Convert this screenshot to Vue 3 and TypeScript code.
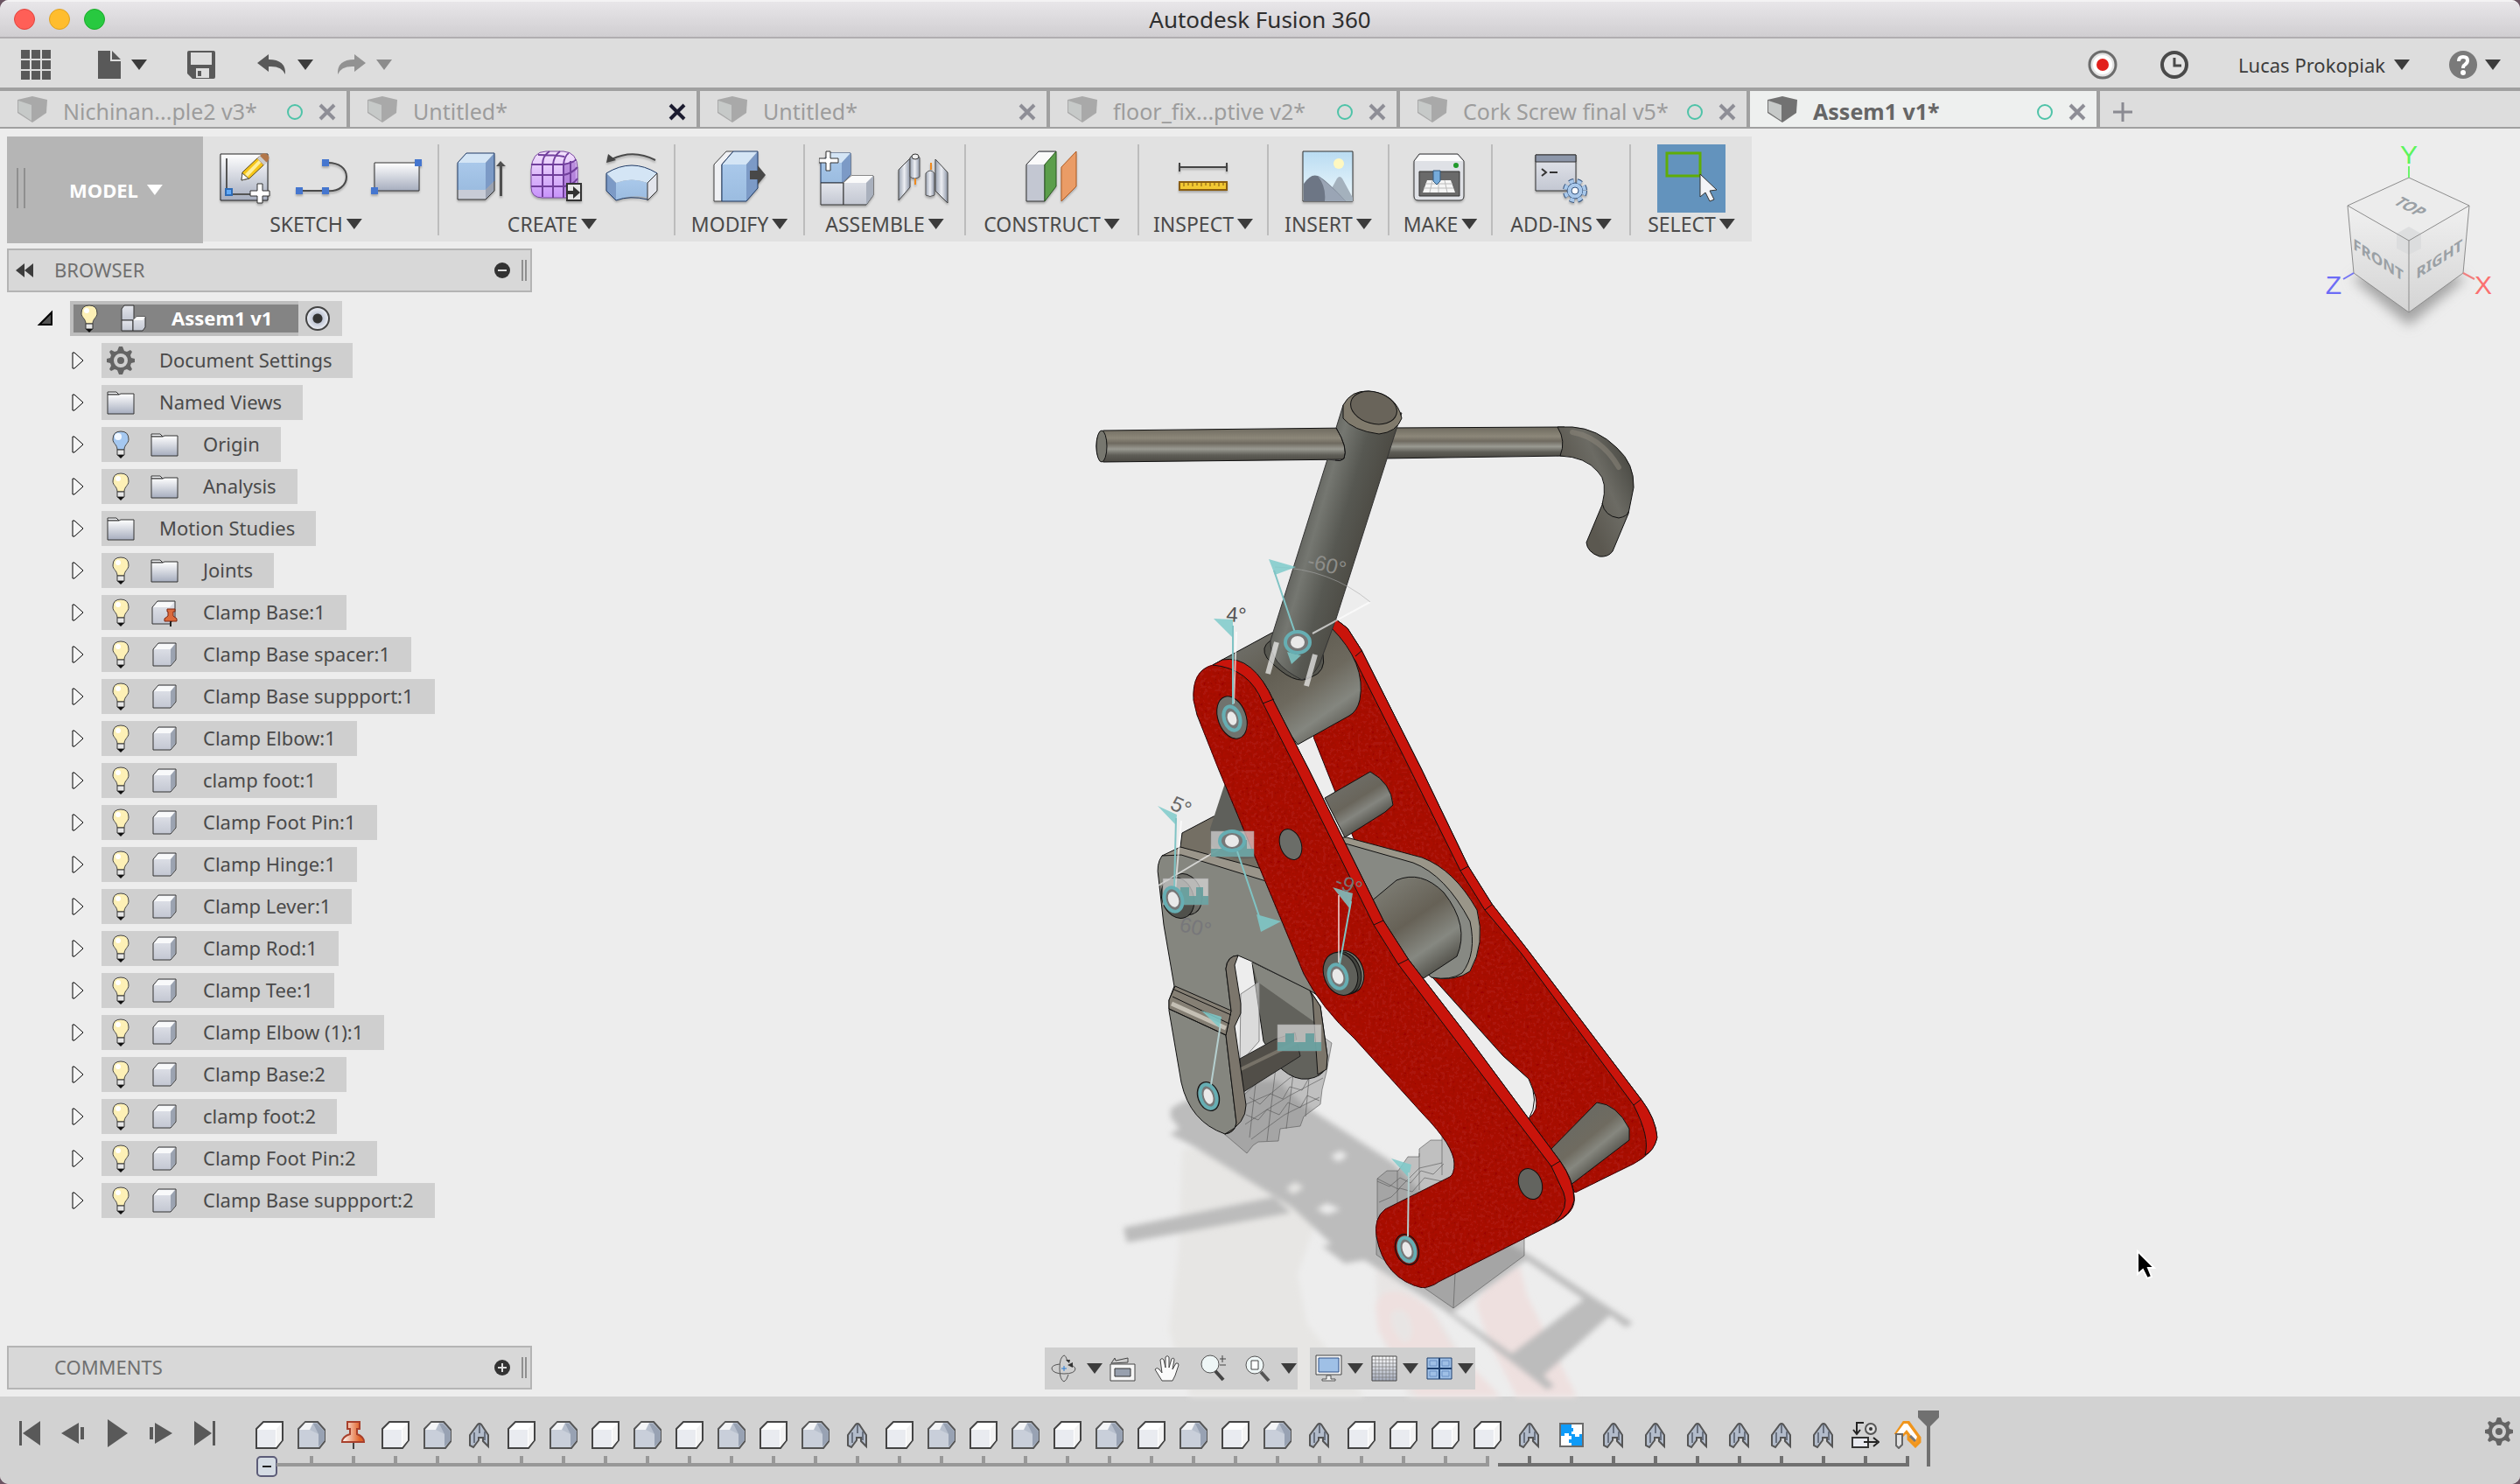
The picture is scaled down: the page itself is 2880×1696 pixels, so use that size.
<script setup lang="ts">
import { ref } from 'vue'

interface DocTab { title: string; saved: boolean; strong?: boolean }
interface ToolGroup { label: string; icons: string[]; active?: boolean }
interface TreeNode { label: string; bulb?: 'on' | 'off'; icon: string }

const tabs: DocTab[] = [
  { title: 'Nichinan...ple2 v3*', saved: true },
  { title: 'Untitled*', saved: false, strong: true },
  { title: 'Untitled*', saved: false },
  { title: 'floor_fix...ptive v2*', saved: true },
  { title: 'Cork Screw final v5*', saved: true },
  { title: 'Assem1 v1*', saved: true },
]
const activeTab = ref(5)

const groups: ToolGroup[] = [
  { label: 'SKETCH', icons: ['sketch', 'arc', 'rect'] },
  { label: 'CREATE', icons: ['extrude', 'form', 'revolve'] },
  { label: 'MODIFY', icons: ['presspull'] },
  { label: 'ASSEMBLE', icons: ['newcomp', 'hinge'] },
  { label: 'CONSTRUCT', icons: ['plane'] },
  { label: 'INSPECT', icons: ['measure'] },
  { label: 'INSERT', icons: ['image'] },
  { label: 'MAKE', icons: ['printer'] },
  { label: 'ADD-INS', icons: ['scripts'] },
  { label: 'SELECT', icons: ['select'], active: true },
]

const part = (label: string, icon = 'body'): TreeNode => ({ label, bulb: 'on', icon })
const nodes: TreeNode[] = [
  { label: 'Document Settings', icon: 'gear' },
  { label: 'Named Views', icon: 'folder' },
  { label: 'Origin', bulb: 'off', icon: 'folder' },
  { label: 'Analysis', bulb: 'on', icon: 'folder' },
  { label: 'Motion Studies', icon: 'folder' },
  { label: 'Joints', bulb: 'on', icon: 'folder' },
  part('Clamp Base:1', 'pinned'),
  part('Clamp Base spacer:1'),
  part('Clamp Base suppport:1'),
  part('Clamp Elbow:1'),
  part('clamp foot:1'),
  part('Clamp Foot Pin:1'),
  part('Clamp Hinge:1'),
  part('Clamp Lever:1'),
  part('Clamp Rod:1'),
  part('Clamp Tee:1'),
  part('Clamp Elbow (1):1'),
  part('Clamp Base:2'),
  part('clamp foot:2'),
  part('Clamp Foot Pin:2'),
  part('Clamp Base suppport:2'),
]

const playback = ['first', 'prev', 'play', 'next', 'last']
const names: Record<string, string> = { c: 't-comp', e: 't-ext', p: 't-pin', j: 't-joint', b: 't-as', m: 't-move', o: 't-drive' }
const history = [...'cepcejcecececejcececececejcccc'].map((k) => names[k])
const recent = [...'jbjjjjjjmo'].map((k) => names[k])
</script>

<template>
  <div class="app">
    <svg class="sprite" width="0" height="0" aria-hidden="true">
      <defs>
        <linearGradient id="gPage" x1="0" y1="0" x2="0" y2="1"><stop offset="0" stop-color="#fff" /><stop offset="1" stop-color="#a6adbe" /></linearGradient>
        <linearGradient id="gBlue" x1="0" y1="0" x2="0" y2="1"><stop offset="0" stop-color="#a9c8ea" /><stop offset="1" stop-color="#9bbce0" /></linearGradient>
        <linearGradient id="gGrey" x1="0" y1="0" x2="0" y2="1"><stop offset="0" stop-color="#e4e6ec" /><stop offset="1" stop-color="#c3c7d2" /></linearGradient>
        <linearGradient id="gForm" x1="0" y1="0" x2="0" y2="1"><stop offset="0" stop-color="#f4e4fc" /><stop offset="1" stop-color="#c792fa" /></linearGradient>
        <linearGradient id="gPin" x1="0" y1="0" x2="1" y2="0"><stop offset="0" stop-color="#fff" /><stop offset=".8" stop-color="#e2632a" /></linearGradient>
        <linearGradient id="gSky" x1="0" y1="0" x2="0" y2="1"><stop offset="0" stop-color="#b9dcf2" /><stop offset="1" stop-color="#eef8fc" /></linearGradient>
        <linearGradient id="gMetal" x1="0" y1="0" x2="1" y2="0"><stop offset="0" stop-color="#9aa3b2" /><stop offset=".5" stop-color="#eceef3" /><stop offset="1" stop-color="#8e97a8" /></linearGradient>
      </defs>

      <!-- quick access -->
      <symbol id="grid" viewBox="0 0 34 34"><path fill="#595959" d="M0 0h10v10H0zM12 0h10v10H12zM24 0h10v10H24zM0 12h10v10H0zM12 12h10v10H12zM24 12h10v10H24zM0 24h10v10H0zM12 24h10v10H12zM24 24h10v10H24z" /></symbol>
      <symbol id="file" viewBox="0 0 32 32"><path fill="#595959" d="M2 0h14v12h12v20H2zM18 0l10 10H18z" /></symbol>
      <symbol id="save" viewBox="0 0 32 32"><path fill="#595959" fill-rule="evenodd" d="M2 0h28q2 0 2 2v28q0 2-2 2H6l-6-6V2q0-2 2-2zM4 2v14h24V2zM10 20v11h15V20zM12 23h4v6h-4z" /></symbol>
      <symbol id="undo" viewBox="0 0 34 24"><path fill="#595959" d="M0 10L13 0v6q20 0 19 17q-4-10-19-9v6z" /></symbol>
      <symbol id="redo" viewBox="0 0 34 24"><path fill="#929292" d="M34 10L21 0v6q-20 0-19 17q4-10 19-9v6z" /></symbol>
      <symbol id="record" viewBox="0 0 34 34"><circle cx="17" cy="17" r="15" fill="#e4e4e4" stroke="#6c6c6c" stroke-width="3" /><circle cx="17" cy="17" r="11" fill="#fff" /><circle cx="17" cy="17" r="7" fill="#e2201c" /></symbol>
      <symbol id="clock" viewBox="0 0 34 34"><circle cx="17" cy="17" r="14" fill="#e4e4e4" stroke="#4a4a4a" stroke-width="4" /><path d="M17 9v9h8" fill="none" stroke="#4a4a4a" stroke-width="3" /></symbol>
      <symbol id="help" viewBox="0 0 34 34"><circle cx="17" cy="17" r="16" fill="#7a7a7a" /><path d="M12 13q0-5 5-5t5 4q0 3-3 5q-2 1-2 4" fill="none" stroke="#fff" stroke-width="4" /><circle cx="17" cy="26" r="3" fill="#fff" /></symbol>
      <symbol id="cube" viewBox="0 0 34 30"><path fill="currentColor" d="M0 4L17 0l17 4-1 15-16 11L0 19z" /><path fill="#c6c9c8" d="M1 5l15 5v18L1 18z" /></symbol>

      <!-- ribbon -->
      <symbol id="sketch" viewBox="0 0 64 64">
        <path d="M4 4h54v53H4z" fill="url(#gPage)" stroke="#222" stroke-width="1" />
        <path d="M11 9v41h34" fill="none" stroke="#555" stroke-width="2" /><path d="M10 44h7v7h-7z" fill="#62aaf7" stroke="#2e6cb8" stroke-width="2" />
        <path d="M28 34l1-9L48 7l8 7-19 18z" fill="#f6c518" stroke="#5b4a1a" /><path d="M32 27L50 9l3 2-18 19z" fill="#fff09a" /><path d="M28 34l1-8 7 6z" fill="#fff" stroke="#555" />
        <path d="M46 9l5-5q4-2 7 1t0 7l-5 5z" fill="#b2774a" /><path d="M46 9l3-3 8 8-3 3z" fill="#ccc" />
        <path d="M46 38h6v8h8v6h-8v8h-6v-8h-8v-6h8z" fill="#fff" stroke="#333" stroke-width="1" />
      </symbol>
      <symbol id="arc" viewBox="0 0 64 64"><path d="M8 46h30c16 2 24-7 24-16S54 13 38 14" fill="none" stroke="#4a4a4a" stroke-width="2" /><path fill="#4576cf" d="M4 42h8v8H4zM34 42h8v8h-8zM34 10h8v8h-8z" /></symbol>
      <symbol id="rect" viewBox="0 0 64 64"><path d="M8 14h51v32H8z" fill="url(#gPage)" stroke="#333" stroke-width="1" /><path fill="#4576cf" d="M4 42h8v8H4zM54 10h8v8h-8z" /></symbol>
      <symbol id="extrude" viewBox="0 0 64 64">
        <path d="M5 14L15 3h32L37 14z" fill="#d4e5f5" /><path d="M5 14h32v31H5z" fill="url(#gBlue)" /><path d="M37 14L47 3v32L37 45z" fill="#7c9ac6" /><path d="M5 45h32v11H5z" fill="#c8ccd6" /><path d="M37 45l10-10v11L37 56z" fill="#9ba2b0" />
        <path d="M5 45V14L15 3h32v32" fill="none" stroke="#1e3a66" stroke-width="1" /><path d="M5 45v11h32l10-10V35" fill="none" stroke="#333" stroke-width="1" />
        <path d="M53 52V18h-4l5-6 6 6h-4v34z" fill="#4f4f4f" />
      </symbol>
      <symbol id="form" viewBox="0 0 64 64">
        <path d="M3 22Q4 1 20 1h20q16 1 16 20v18q0 15-14 15H16Q3 54 3 42z" fill="url(#gForm)" stroke="#7a4aa0" stroke-width="1" />
        <path d="M40 16q12-6 14-2v28q-4 10-12 10z" fill="#9b62c8" opacity=".6" />
        <path d="M3 16h37q14-3 14-6M4 28h36q10-2 16-9M3 41h38q10-2 15-9M11 5q20 0 30 2M16 53V16q0-10 8-15M28 54V16q1-10 8-15M40 54V16q1-10 6-13M48 50V12" fill="none" stroke="#713f9c" stroke-width="2" />
        <path d="M44 38h16v19H44z" fill="#e6e6e6" stroke="#333" stroke-width="2" /><path d="M43 46h8v-5l8 7-8 7v-5h-8z" fill="#333" />
      </symbol>
      <symbol id="revolve" viewBox="0 0 64 64">
        <path d="M3 26Q32 8 61 26L50 37Q32 30 14 37z" fill="#d4e5f5" /><path d="M3 26l11 11v20L3 46z" fill="#7c9ac6" /><path d="M14 37q18-7 36 0v17q-18-4-36 3z" fill="url(#gBlue)" /><path d="M50 37l11-11v20L50 57z" fill="#e3e5ec" stroke="#333" />
        <path d="M3 46V26Q32 8 61 26M3 46l11 11q16-6 36-1" fill="none" stroke="#1e3a66" stroke-width="1" />
        <path d="M9 10Q34-2 59 11" fill="none" stroke="#4a4a4a" stroke-width="2" /><path d="M3 14L5 4l9 7z" fill="#444" />
      </symbol>
      <symbol id="presspull" viewBox="0 0 64 64">
        <path d="M3 16L17 1h8L12 16v42H3z" fill="#f0f1f4" stroke="#444" /><path d="M12 16h28v42H12z" fill="url(#gBlue)" /><path d="M12 16L25 1h28L40 16z" fill="#d4e5f5" /><path d="M40 16L53 1v42L40 58z" fill="#7c9ac6" /><path d="M12 58V16L25 1h28v42L40 58z" fill="none" stroke="#1e3a66" />
        <path d="M44 23h9v-6l9 11-9 11v-6h-9z" fill="#484848" />
      </symbol>
      <symbol id="newcomp" viewBox="0 0 64 64">
        <path d="M2 14L12 3h24v25L26 37H2z" fill="url(#gBlue)" stroke="#1e3a66" /><path d="M12 3h24L26 14H2z" fill="#d4e5f5" /><path d="M26 14L36 3v25l-10 9z" fill="#7c9ac6" />
        <path d="M2 37h26V62H2z" fill="url(#gGrey)" stroke="#333" /><path d="M28 37l9-8h25v22L54 62H28z" fill="url(#gGrey)" stroke="#333" /><path d="M28 37l9-8h25l-8 8z" fill="#fafafa" /><path d="M54 37l8-8v22l-8 11z" fill="#a9b0bd" />
        <path d="M8 1h5v8h9v5h-9v9H8v-9H0V9h8z" fill="#fff" stroke="#333" stroke-width="1" />
      </symbol>
      <symbol id="hinge" viewBox="0 0 64 64">
        <path d="M5 22L18 9v33L5 57z" fill="url(#gMetal)" stroke="#444" /><path d="M18 8q5-6 11 0v22q-6 4-11 0z" fill="url(#gMetal)" stroke="#555" /><ellipse cx="24" cy="7" rx="4" ry="3" fill="#eee" stroke="#333" />
        <path d="M24 32v7M42 14v8" stroke="#ef8a1e" stroke-width="2" /><path d="M36 26q5-6 10 0v25q-5 3-10 0z" fill="url(#gMetal)" stroke="#555" /><path d="M47 10l14 15v35L47 46z" fill="url(#gMetal)" stroke="#444" />
      </symbol>
      <symbol id="plane" viewBox="0 0 64 64">
        <path d="M3 16L17 1h20L24 16v42H3z" fill="#c3c7d2" stroke="#333" /><path d="M4 16L17 2h20L24 16z" fill="#fafafa" /><path d="M24 16L37 1v40L24 58z" fill="#5b9e4b" stroke="#2b5a22" /><path d="M43 19L60 1v40L43 58z" fill="#ea9c66" stroke="#b05a20" />
      </symbol>
      <symbol id="measure" viewBox="0 0 64 64">
        <path d="M5 14v10M59 14v10M5 19h54" stroke="#444" stroke-width="2" /><path d="M5 36h54v9H5z" fill="#f2c832" stroke="#8a5e12" stroke-width="2" /><path d="M10 37v4M15 37v3M20 37v4M25 37v3M30 37v4M35 37v3M40 37v4M45 37v3M50 37v4M55 37v3" stroke="#7a5510" />
      </symbol>
      <symbol id="image" viewBox="0 0 64 64">
        <path d="M3 1h57v57H3z" fill="url(#gSky)" stroke="#333" /><circle cx="44" cy="15" r="6" fill="#fff8c0" /><path d="M28 58l14-26q3-4 6 0l12 22v4z" fill="#a4b1bd" /><path d="M4 38q8-12 16-9t32 29H4z" fill="#6d7685" /><path d="M20 29q14 10 32 29H28q2-16-8-29z" fill="#9aa5b5" />
      </symbol>
      <symbol id="printer" viewBox="0 0 64 64">
        <path d="M2 12l6-8h44l7 8v40q0 5-5 5H7q-5 0-5-5z" fill="#dfe1e6" stroke="#333" stroke-width="1" /><path d="M3 12l6-7h42l7 7z" fill="#fbfbfb" /><path d="M8 24h46v28H8z" fill="#6a6a6a" stroke="#333" /><path d="M17 34h27l5 14H12z" fill="#f5f5f5" /><path d="M15 38h31M13 43h34M23 34l-3 14M30 34v14M37 34l3 14" stroke="#bbb" /><path d="M24 23h8v12l-4 4-4-4z" fill="#76abda" stroke="#33597c" /><circle cx="50" cy="17" r="3" fill="#229a2c" />
      </symbol>
      <symbol id="scripts" viewBox="0 0 64 64">
        <path d="M3 5h46v41H3z" fill="url(#gGrey)" stroke="#333" /><path d="M3 5h46v8H3z" fill="#8d97aa" stroke="#333" /><path d="M10 21l5 4-5 4M19 25h9" fill="none" stroke="#333" stroke-width="2" />
        <circle cx="48" cy="46" r="11" fill="none" stroke="#33527c" stroke-width="6" stroke-dasharray="5 4" /><circle cx="48" cy="46" r="9" fill="#a9c8ea" stroke="#33527c" /><circle cx="48" cy="46" r="11" fill="none" stroke="#a9c8ea" stroke-width="4" stroke-dasharray="5 4" /><circle cx="48" cy="46" r="4" fill="#fff" stroke="#33527c" />
      </symbol>
      <symbol id="select" viewBox="0 0 64 64"><path d="M4 3h38v26H4z" fill="none" stroke="#60ad07" stroke-width="3" /><path d="M42 27v26l6-5 5 10 5-2-5-10 8-1z" fill="#f3f4f7" stroke="#333" stroke-width="1" /></symbol>

      <!-- browser -->
      <symbol id="bulb-on" viewBox="0 0 32 32"><path d="M16 1q9 0 9 9c0 5-5 6-5 12h-8c0-6-5-7-5-12q0-9 9-9z" fill="#fdf0b6" stroke="#444" stroke-width="1" /><circle cx="13" cy="7" r="3" fill="#fff" /><path d="M12 22h8v6h-8z" fill="#e6e6e6" stroke="#333" /><path d="M12 28h8l-4 4z" fill="#111" /></symbol>
      <symbol id="bulb-off" viewBox="0 0 32 32"><path d="M16 1q9 0 9 9c0 5-5 6-5 12h-8c0-6-5-7-5-12q0-9 9-9z" fill="#a5c8f0" stroke="#444" stroke-width="1" /><circle cx="13" cy="7" r="4" fill="#f2f8ff" /><path d="M12 22h8v6h-8z" fill="#e6e6e6" stroke="#333" /><path d="M12 28h8l-4 4z" fill="#111" /></symbol>
      <symbol id="folder" viewBox="0 0 32 32"><path d="M1 7V4h10l3 3z" fill="#f5f6f8" stroke="#333" /><path d="M1 7h13l2-1h15v23H1z" fill="url(#gPage)" stroke="#333" /></symbol>
      <symbol id="body" viewBox="0 0 32 32"><path d="M3 10l6-7h20v19l-6 7H3z" fill="url(#gGrey)" stroke="#333" stroke-width="1" /><path d="M4 10l5-6h19l-5 6z" fill="#f8f9fa" /><path d="M23 10l5-6v18l-5 6z" fill="#9ba3b1" /></symbol>
      <symbol id="pinned" viewBox="0 0 32 32"><path d="M2 10l6-7h20v19l-6 7H2z" fill="url(#gGrey)" stroke="#333" stroke-width="1" /><path d="M3 10l5-6h19l-5 6z" fill="#f8f9fa" /><path d="M19 12h9v3h-2v5l4 3v3H16v-3l4-3v-5h-1z" fill="#dc6a3c" stroke="#7a2410" /><path d="M23 26v6" stroke="#222" stroke-width="2" /></symbol>
      <symbol id="assembly" viewBox="0 0 32 32"><path d="M3 5l3-4h11v17H3z" fill="url(#gGrey)" stroke="#333" /><path d="M3 18h13v12H3z" fill="url(#gGrey)" stroke="#333" /><path d="M16 18l4-4h10v12l-3 4H16z" fill="url(#gGrey)" stroke="#333" /><path d="M16 18l4-4h10l-3 4z" fill="#fafafa" /></symbol>
      <symbol id="gear" viewBox="0 0 32 32"><path fill="#646464" fill-rule="evenodd" d="M14 0h4l2 5 3 1 4-2 2 2-2 4 1 3 4 1v4l-4 1-1 3 2 4-2 2-4-2-3 1-2 5h-4l-2-5-3-1-4 2-2-2 2-4-1-3-4-1v-4l4-1 1-3-2-4 2-2 4 2 3-1zM16 8a8 8 0 1 0 0 16a8 8 0 1 0 0-16zM16 12a4 4 0 1 1 0 8a4 4 0 1 1 0-8z" /></symbol>

      <!-- navigation bar -->
      <symbol id="orbit" viewBox="0 0 32 32"><path d="M20 8Q18 1 16 1q-5 2-5 15t5 15q3-1 5-8M11 11Q2 12 2 16q1 6 14 6t13-6q-1-3-6-4" fill="none" stroke="#555" stroke-width="1" /><path d="M18 6l5 0-1 4zM26 9l-6 3 6 3z" fill="#333" /><path d="M16 13v6M13 16h6" stroke="#2d7fd6" stroke-width="1" /></symbol>
      <symbol id="lookat" viewBox="0 0 32 32"><path d="M4 10l4-6 1 3 14-3v5z" fill="#ccc" stroke="#444" /><path d="M3 11h28v19H3z" fill="#f6f6f6" stroke="#444" stroke-width="1" /><path d="M8 16h18v9H8z" fill="#98a0ae" stroke="#333" /></symbol>
      <symbol id="pan" viewBox="0 0 32 32"><path d="M10 30L2 17q2-3 5 0l3 4L8 6q2-3 4 0l2 9V3q2-3 4 0v12l3-10q3-2 3 1l-2 11 4-7q3-1 3 2l-4 12-3 6z" fill="#fafafa" stroke="#444" /></symbol>
      <symbol id="zoom" viewBox="0 0 32 32"><circle cx="13" cy="11" r="10" fill="#eef6f6" stroke="#555" stroke-width="1" /><path d="M19 19l9 10" stroke="#444" stroke-width="4" /><path d="M27 1v8M24 5h7M24 12h7" stroke="#444" /></symbol>
      <symbol id="fit" viewBox="0 0 32 32"><circle cx="12" cy="12" r="10" fill="#eef6f6" stroke="#555" stroke-width="1" /><path d="M8 7h8v10H8z" fill="#fff" stroke="#444" /><path d="M19 20l9 10" stroke="#555" stroke-width="4" /></symbol>
      <symbol id="display" viewBox="0 0 32 32"><path d="M1 1h29v22H1z" fill="#f4f4f4" stroke="#444" stroke-width="1" /><path d="M4 4h23v16H4z" fill="#9fc0e6" stroke="#2d4f86" stroke-width="1" /><path d="M13 24h5v4h5v2H8v-2h5z" fill="#eee" stroke="#555" /></symbol>
      <symbol id="gridset" viewBox="0 0 32 32"><path d="M2 2h28v28H2z" fill="url(#gPage)" /><path d="M6 2v28M10 2v28M14 2v28M18 2v28M22 2v28M26 2v28M2 6h28M2 10h28M2 14h28M2 18h28M2 22h28M2 26h28" fill="none" stroke="#777" stroke-width="1" opacity=".7" /><path d="M2 2h28v28H2z" fill="none" stroke="#444" /></symbol>
      <symbol id="views" viewBox="0 0 32 32"><path d="M2 4h28v24H2z" fill="#9fc0e6" stroke="#1e4070" stroke-width="1" /><path d="M16 4v24M2 16h28" stroke="#1e4070" stroke-width="2" /><path d="M5 7h8v6H5zM19 7h8v6h-8zM5 19h8v6H5zM19 19h8v6h-8z" fill="none" stroke="#6b90c4" /></symbol>

      <!-- timeline -->
      <symbol id="first" viewBox="0 0 32 32"><path fill="#595959" d="M4 2h3v28H4zM28 2v28L8 16z" /></symbol>
      <symbol id="prev" viewBox="0 0 32 32"><path fill="#595959" d="M22 4v24L2 16zM24 9h4v14h-4z" /></symbol>
      <symbol id="play" viewBox="0 0 32 32"><path fill="#595959" d="M5 0l23 16L5 32z" /></symbol>
      <symbol id="next" viewBox="0 0 32 32"><path fill="#595959" d="M9 4v24l20-12zM3 9h4v14H3z" /></symbol>
      <symbol id="last" viewBox="0 0 32 32"><path fill="#595959" d="M25 2h3v28h-3zM4 2v28l20-14z" /></symbol>
      <symbol id="t-comp" viewBox="0 0 32 32"><path d="M1 9l8-8h22v21l-7 9H1z" fill="#fff" stroke="#444" stroke-width="2" /><path d="M2 10h21v20H2z" fill="#e9ebf0" /><path d="M24 9l6-7v20l-6 7z" fill="#f3f3f3" /></symbol>
      <symbol id="t-ext" viewBox="0 0 32 32"><path d="M1 9l8-8h14l9 10v11l-7 9H1z" fill="#b7bfcd" stroke="#555" stroke-width="2" /><path d="M2 10l7-8h9l-4 8z" fill="#f4f5f7" /><path d="M18 3l6 12v14l7-7V12l-9-9z" fill="#98a2b3" /><path d="M2 10h12l10 5v15H2z" fill="#c9cfda" /></symbol>
      <symbol id="t-pin" viewBox="0 0 32 32"><path d="M9 1h14v8h-3v6q8 3 8 9H3q0-6 9-9V9H9z" fill="url(#gPin)" stroke="#a8402c" stroke-width="2" /><path d="M16 25v7" stroke="#444" stroke-width="2" /></symbol>
      <symbol id="t-joint" viewBox="0 0 32 32"><path d="M5 16l9-12q2-2 4 0l8 12v13l-6-6v-4h-5v3l-6 8-4-2z" fill="#b3bccb" stroke="#555" stroke-width="2" /><path d="M16 4v10M10 13v12M22 12v10" stroke="#6a7280" stroke-width="2" /></symbol>
      <symbol id="t-as" viewBox="0 0 32 32"><path d="M3 3h26v26H3z" fill="#0f9bf8" stroke="#6b6b6b" stroke-width="2" /><path d="M16 4h12v11h-3v3h-5v-3h-4v-3h2V8h-2zM4 17h4v-3h5v3h3v4h-3v4h3v3H4z" fill="#fff" /></symbol>
      <symbol id="t-move" viewBox="0 0 32 32"><path d="M1 19h18v11H1z" fill="#e9eaf0" stroke="#333" stroke-width="2" /><path d="M14 24h15M25 19l6 5-6 5M14 2H6v12M2 10l4 5 4-5" fill="none" stroke="#222" stroke-width="2" /><circle cx="22" cy="9" r="6" fill="#ddd" stroke="#555" stroke-width="2" /><circle cx="22" cy="9" r="2" fill="#333" /></symbol>
      <symbol id="t-drive" viewBox="0 0 32 32"><path d="M3 14L12 1h5l13 18v5l-5 5-8-8v-6l-3-2-4 4z" fill="#f59a24" stroke="#f0951c" stroke-width="3" /><path d="M3 15L12 3h4l11 15-2 5-10-13-6 7z" fill="#fff" /><path d="M3 15h7v12l-4 4-3-3z" fill="#e2e2e2" stroke="#666" stroke-width="2" /><path d="M19 17l6 6" stroke="#777" stroke-width="3" /></symbol>
    </svg>

    <header class="titlebar">
      <div class="lights">
        <button class="light red" aria-label="Close"></button>
        <button class="light amber" aria-label="Minimize"></button>
        <button class="light green" aria-label="Zoom"></button>
      </div>
      <h1 class="title">Autodesk Fusion 360</h1>
    </header>

    <div class="quickbar">
      <button class="quick" aria-label="Data panel"><svg width="34" height="34"><use href="#grid" /></svg></button>
      <button class="quick" aria-label="File"><svg width="32" height="32"><use href="#file" /></svg><i class="caret"></i></button>
      <button class="quick save" aria-label="Save"><svg width="32" height="32"><use href="#save" /></svg></button>
      <button class="quick" aria-label="Undo"><svg width="34" height="24"><use href="#undo" /></svg><i class="caret"></i></button>
      <button class="quick redo" aria-label="Redo"><svg width="34" height="24"><use href="#redo" /></svg><i class="caret dim"></i></button>
      <span class="grow"></span>
      <button class="quick" aria-label="Record"><svg width="34" height="34"><use href="#record" /></svg></button>
      <button class="quick" aria-label="Job status"><svg width="34" height="34"><use href="#clock" /></svg></button>
      <button class="quick user">Lucas Prokopiak<i class="caret"></i></button>
      <button class="quick helpbtn" aria-label="Help"><svg width="34" height="34"><use href="#help" /></svg><i class="caret"></i></button>
    </div>

    <nav class="tabs">
      <div v-for="(t, i) in tabs" :key="i" class="tab" :class="{ active: i === activeTab }">
        <button class="tabname" @click="activeTab = i"><svg width="34" height="30"><use href="#cube" /></svg><span>{{ t.title }}</span></button>
        <i v-if="t.saved" class="ring"></i>
        <button class="close" :class="{ strong: t.strong }" aria-label="Close tab"><svg width="20" height="20" viewBox="0 0 20 20"><path d="M2 2l16 16M18 2L2 18" fill="none" stroke="currentColor" stroke-width="4" /></svg></button>
      </div>
      <button class="addtab" aria-label="New tab"><svg width="24" height="24" viewBox="0 0 24 24"><path d="M12 1v22M1 12h22" stroke="#8a8a92" stroke-width="3" /></svg></button>
    </nav>

    <main class="workspace">
      <svg class="scene" viewBox="0 147 2880 1449" preserveAspectRatio="xMidYMid meet" aria-hidden="true">
        <defs>
          <filter id="soft" x="-10%" y="-10%" width="120%" height="120%"><feGaussianBlur stdDeviation="3" /></filter>
          <filter id="grain" x="0" y="0" width="100%" height="100%">
            <feTurbulence type="fractalNoise" baseFrequency=".25" numOctaves="2" seed="4" result="n" />
            <feColorMatrix in="n" type="matrix" values="0 0 0 0 .3  0 0 0 0 0  0 0 0 0 0  0 0 0 -1.4 .85" result="d" />
            <feComposite in="d" in2="SourceGraphic" operator="in" result="c" />
            <feMerge><feMergeNode in="SourceGraphic" /><feMergeNode in="c" /></feMerge>
          </filter>
          <linearGradient id="bar" x1="0" y1="0" x2="0" y2="1"><stop offset="0" stop-color="#6e6a5f" /><stop offset=".3" stop-color="#8c8779" /><stop offset=".45" stop-color="#6f6a60" /><stop offset=".62" stop-color="#9a9a92" /><stop offset=".8" stop-color="#5e5d56" /><stop offset="1" stop-color="#4b4943" /></linearGradient>
          <linearGradient id="rod" gradientUnits="userSpaceOnUse" x1="1484" y1="600" x2="1560" y2="622"><stop offset="0" stop-color="#5c5d58" /><stop offset=".25" stop-color="#757771" /><stop offset=".6" stop-color="#575852" /><stop offset="1" stop-color="#4c4a43" /></linearGradient>
          <linearGradient id="hook" gradientUnits="userSpaceOnUse" x1="1800" y1="560" x2="1866" y2="530"><stop offset="0" stop-color="#5b5850" /><stop offset=".5" stop-color="#6c6b64" /><stop offset="1" stop-color="#4a4a44" /></linearGradient>
          <linearGradient id="sleeve" gradientUnits="userSpaceOnUse" x1="1435" y1="722" x2="1525" y2="850"><stop offset="0" stop-color="#6f6f69" /><stop offset=".3" stop-color="#625e53" /><stop offset=".55" stop-color="#6d695e" /><stop offset=".78" stop-color="#84867f" /><stop offset="1" stop-color="#524f48" /></linearGradient>
          <linearGradient id="shaftA" gradientUnits="userSpaceOnUse" x1="1536" y1="896" x2="1566" y2="944"><stop offset="0" stop-color="#6e6d66" /><stop offset=".4" stop-color="#69655b" /><stop offset=".65" stop-color="#84857f" /><stop offset="1" stop-color="#4f4d46" /></linearGradient>
          <linearGradient id="drum" gradientUnits="userSpaceOnUse" x1="1585" y1="1015" x2="1650" y2="1110"><stop offset="0" stop-color="#7a7970" /><stop offset=".4" stop-color="#666156" /><stop offset=".72" stop-color="#868881" /><stop offset="1" stop-color="#4d4b44" /></linearGradient>
          <linearGradient id="shaftB" gradientUnits="userSpaceOnUse" x1="1800" y1="1284" x2="1836" y2="1328"><stop offset="0" stop-color="#6b6a62" /><stop offset=".4" stop-color="#6f6b60" /><stop offset=".65" stop-color="#86877f" /><stop offset="1" stop-color="#55534c" /></linearGradient>
        </defs>

        <!-- floor reflection -->
        <g filter="url(#soft)">
          <path d="M1351 1313L1347 1430 1336 1520 1360 1596H1559L1494 1513 1483 1457 1514 1367 1507 1307z" fill="#e7e6e4" />
          <path d="M1572 1440L1575 1520 1610 1596H1700L1640 1500z" fill="#e8e5e4" />
          <path fill-rule="evenodd" d="M1572 1493Q1576 1476 1592 1476T1633 1493L1660 1540 1690 1570 1715 1596H1620L1575 1520zM1590 1500Q1588 1520 1605 1535Q1618 1530 1612 1510T1590 1500z" fill="#eee0df" />
          <path d="M1687 1490Q1700 1460 1737 1447L1745 1480 1802 1596H1733L1700 1530z" fill="#eee0df" />
        </g>
        <!-- cast shadow -->
        <g filter="url(#soft)">
          <path fill-rule="evenodd" d="M1338 1267L1350 1260 1423 1235 1460 1235 1490 1263 1594 1330 1640 1380 1746 1433 1866 1512 1858 1517 1840 1503 1764 1572 1776 1584 1768 1588 1722 1552 1650 1497 1559 1440 1537 1444 1511 1424 1522 1422 1477 1380 1364 1310 1337 1296 1348 1290 1338 1277zM1521 1321L1532 1315 1540 1321 1529 1328zM1470 1358L1480 1351 1490 1357 1478 1365zM1504 1382L1516 1375 1532 1382 1517 1388zM1660 1500L1728 1547 1810 1485 1744 1440z" fill="#bcbcbc" />
          <path d="M1284 1403L1288 1420 1475 1386 1456 1368z" fill="#bcbcbc" />
        </g>

        <!-- clamp feet -->
        <g fill="#8a8a8a" fill-opacity=".45" stroke="#555" stroke-opacity=".6">
          <path d="M1398 1295L1425 1318 1432 1309 1438 1305 1461 1304 1463 1290 1486 1287 1490 1276 1509 1262 1511 1245 1516 1225 1522 1192 1505 1180 1461 1215 1423 1250z" />
          <path d="M1428 1300L1436 1230M1448 1304L1458 1220M1470 1290L1480 1212M1492 1276L1498 1210M1424 1262L1452 1250 1474 1232 1514 1212M1423 1285L1448 1268 1474 1252 1512 1232M1430 1302L1446 1290 1468 1274 1508 1254M1424 1274l14 6 10-12 14 6 10-14 14 6 8-14 14 6M1428 1254l12 8 12-12 14 6 8-14 14 4 8-14" fill="none" />
          <path d="M1574 1393V1347L1585 1338H1598L1609 1322H1622V1313L1635 1303H1648V1290L1664 1330 1660 1345z" />
          <path d="M1574 1350l14 6 12-10 12 6 12-14 14 4 12-12M1576 1374l14-6 10-10 14 4 14-16 20 4M1597 1338v40M1622 1318v42M1648 1303v40M1574 1347l24 12 24-24 26-6" fill="none" />
          <path d="M1573 1413V1434L1661 1495 1742 1435V1412L1663 1455zM1663 1455L1661 1495" />
        </g>

        <g stroke="#111" stroke-width="1" stroke-linejoin="round">
          <!-- base plates -->
          <path d="M1431 1100L1444 1190 1465 1222Q1480 1235 1495 1233T1516 1220L1517 1207 1509 1150 1497 1132z" fill="#62625c" />
          <path d="M1431 1100L1497 1132 1505 1170 1437 1122z" fill="#85867f" stroke="none" />
          <path d="M1497 1132L1509 1150 1517 1207 1516 1222 1506 1228 1500 1140z" fill="#7b756a" />
          <path d="M1418 1136L1439 1122V1190L1417 1215z" fill="#cfcfcf" fill-opacity=".6" stroke="#888" />
          <path d="M1417 1210L1457 1188 1480 1180 1486 1207 1421 1248z" fill="#514e48" stroke="#222" />
          <path d="M1418 1222L1484 1190" stroke="#777268" stroke-width="4" />
          <path d="M1349 968L1351 952 1387 933 1420 930 1450 985 1440 1000z" fill="#746f64" />
          <path d="M1399 898L1383 947 1384 965Q1400 986 1436 980L1444 960 1408 880z" fill="#5f605b" stroke="none" />
          <path d="M1328 978L1349 968 1446 994V1008L1350 979z" fill="#9a958a" />
          <path d="M1328 978Q1321 988 1324 1003L1330 1057 1342 1127 1336 1143V1155L1350 1237Q1360 1282 1400 1296Q1412 1294 1413 1283L1401 1183 1407 1155 1401 1107Q1402 1092 1415 1092L1429 1098 1497 1132 1525 1150 1450 1008 1350 977z" fill="#85867f" />
          <path d="M1401 1107Q1403 1092 1415 1092L1411 1103 1418 1147V1158L1411 1173 1424 1263Q1424 1284 1400 1296Q1412 1294 1413 1283L1401 1183 1407 1155z" fill="#7c766c" />
          <path d="M1343 1127L1407 1155 1401 1183 1336 1153V1143z" fill="#857f74" />
          <path d="M1342 1131L1407 1160M1340 1139L1405 1170" fill="none" /><path d="M1339 1147L1401 1175" stroke="#c4bfb4" stroke-width="5" /><path d="M1336 1153L1401 1183" />

          <!-- rear arm -->
          <path filter="url(#grain)" d="M1501 842L1521 714 1527 708 1540 718 1556 743 1625 880 1678 990 1705 1033 1747 1087 1876 1257Q1892 1278 1894 1300Q1890 1318 1867 1330L1800 1363 1747 1278Q1759 1270 1755 1253L1747 1233 1718 1207 1638 1118 1547 958z" fill="#ac130d" />
          <path d="M1521 718L1527 708 1540 718 1556 743 1625 880 1678 990 1705 1033 1747 1087 1876 1257Q1892 1278 1894 1300Q1890 1316 1880 1320 1886 1300 1867 1263L1739 1090 1697 1040 1669 995 1602 860 1549 755z" fill="#c9140b" />
          <path d="M1549 750l8-7M1669 995l9-5M1697 1040l9-7M1867 1263l9-7" />
          <path d="M1536 1118L1638 1118 1718 1207 1747 1233Q1760 1258 1747 1279L1700 1210z" fill="#ededed" stroke="none" />
          <path d="M1638 1118L1718 1207 1747 1233Q1760 1258 1747 1279" fill="none" />

          <path d="M1514 912L1566 882Q1590 895 1592 920L1583 928 1537 957z" fill="url(#shaftA)" />
          <path d="M1760 1326L1825 1260Q1848 1262 1862 1290V1303L1790 1358z" fill="url(#shaftB)" />
          <!-- lever and drum -->
          <path d="M1530 957H1539L1625 980Q1662 994 1688 1040Q1698 1078 1680 1110Q1664 1122 1636 1117L1560 1047z" fill="#9a9689" />
          <path d="M1530 962L1541 965 1615 986Q1652 1000 1680 1053Q1688 1090 1671 1112Q1658 1121 1636 1117L1560 1047z" fill="#878983" />
          <path d="M1560 1036L1596 1006Q1624 994 1650 1020Q1680 1058 1665 1093L1627 1118 1600 1098 1570 1047z" fill="url(#drum)" />

          <!-- cross sleeve -->
          <path d="M1395 755L1454 723 1521 717Q1562 758 1554 800 1551 813 1542 818L1483 851 1440 790z" fill="url(#sleeve)" />
          <path d="M1452 732Q1440 740 1448 752 1480 786 1498 774 1516 768 1512 748" fill="#56564f" />

          <!-- handle -->
          <path d="M1261 492L1545 489V525L1261 528Q1253 526 1253 510T1261 492z" fill="url(#bar)" />
          <ellipse cx="1259" cy="510" rx="6" ry="18" fill="#77776f" />
          <path d="M1586 489L1788 488V521L1580 524z" fill="url(#bar)" />
          <path d="M1780 488H1797Q1826 490 1848 512 1868 530 1867 557L1861 587 1843 630Q1838 637 1828 636 1814 631 1813 620L1831 577Q1838 550 1826 539 1812 522 1783 521 1790 504 1780 488z" fill="url(#hook)" />
          <path d="M1797 494Q1830 500 1850 534" fill="none" stroke="#8f8a7d" stroke-width="6" stroke-linecap="round" opacity=".5" />
          <path d="M1831 575Q1834 590 1850 592 1860 590 1861 585" fill="none" />
          <path d="M1535 463L1527 489Q1541 512 1536 524 1532 528 1526 526L1517 525 1452 732Q1450 758 1488 777 1506 772 1512 748L1527 707 1596 490 1602 472z" fill="url(#rod)" stroke="#333" />
          <path d="M1527 489Q1541 512 1536 524 1532 528 1526 526" fill="none" />
          <path d="M1535 463Q1544 446 1564 447 1596 450 1602 478 1596 494 1576 496 1546 492 1535 478z" fill="#807a6c" />
          <ellipse cx="1570" cy="466" rx="27" ry="18" fill="#69645a" transform="rotate(16 1570 466)" />

          <!-- front arm -->
          <path filter="url(#grain)" d="M1386 760Q1362 766 1364 800L1368 817 1393 880 1490 1113Q1510 1152 1549 1188L1626 1273Q1662 1310 1662 1330 1662 1342 1657 1345L1583 1382Q1570 1392 1573 1413 1582 1462 1626 1472 1638 1470 1644 1465L1776 1398Q1802 1386 1799 1366 1797 1346 1783 1327L1674 1180 1610 1097 1581 1052 1496 880 1456 802Q1436 754 1397 754z" fill="#ac130d" />
          <path d="M1386 760L1397 754Q1432 748 1456 802L1496 880 1581 1052 1610 1097 1674 1180 1783 1327Q1799 1350 1799 1372 1796 1388 1776 1398 1794 1380 1787 1363L1773 1333 1657 1180 1598 1102 1570 1057 1482 880 1443 803Q1428 764 1386 760z" fill="#c9140b" />
          <path d="M1443 804l13-5M1570 1057l11-5M1598 1102l12-6M1773 1333l10-6" />
          <ellipse cx="1475" cy="965" rx="12" ry="18" fill="#6b6d68" transform="rotate(-20 1475 965)" />
          <ellipse cx="1749" cy="1353" rx="13" ry="18" fill="#63645f" transform="rotate(-20 1749 1353)" />
          <ellipse cx="1408" cy="820" rx="16" ry="25" fill="#70736e" transform="rotate(-20 1408 820)" />
          <ellipse cx="1539" cy="1111" rx="19" ry="25" fill="#77776e" transform="rotate(-20 1539 1111)" />
          <ellipse cx="1536" cy="1112" rx="19" ry="25" fill="#44453f" transform="rotate(-20 1536 1112)" />
          <ellipse cx="1532" cy="1113" rx="19" ry="25" fill="#5f605a" transform="rotate(-20 1532 1113)" />
          <ellipse cx="1355" cy="1022" rx="18" ry="24" fill="#6c6c66" transform="rotate(-20 1355 1022)" />
          <ellipse cx="1346" cy="1026" rx="18" ry="24" fill="#4f504b" transform="rotate(-20 1346 1026)" />
          <ellipse cx="1381" cy="1253" rx="12" ry="17" fill="#444" transform="rotate(-20 1381 1253)" />
          <ellipse cx="1608" cy="1428" rx="13" ry="18" fill="#7a120c" transform="rotate(-20 1608 1428)" />
        </g>

        <!-- joint glyphs -->
        <g fill="none" stroke="#fff" stroke-opacity=".65" stroke-width="2">
          <path d="M1413 722L1410 804M1500 724L1566 688M1394 970L1324 1012M1530 1023V1100M1350 938L1343 1018" />
          <path d="M1459 734L1449 770M1503 748L1493 784" stroke-width="6" />
        </g>
        <path d="M1457 648Q1520 650 1566 688" fill="none" stroke="#aaa" stroke-opacity=".6" />
        <g fill="#dcdcdc" fill-opacity=".7" stroke="#999" stroke-opacity=".5"><path d="M1384 950h49v29h-49zM1329 1004h52v30h-52zM1460 1171h50v30h-50z" /></g>
        <g fill="#5f9c9b" fill-opacity=".85"><path d="M1384 979v-9h12v-10h9v10h10v-10h10v10h8v9zM1341 1034v-10h8v-10h10v10h8v-10h8v10h6v10zM1460 1201v-10h9v-10h10v10h13v-10h10v10h8v10z" /></g>
        <g fill="#7ecaca" fill-opacity=".85">
          <path d="M1450 639L1481 648 1457 657zM1387 707L1409 708V729zM1471 745L1487 749 1476 759zM1323 921L1345 931 1344 943zM1436 1045L1464 1053 1441 1065zM1523 1014L1546 1021 1543 1039zM1373 1155L1396 1162 1394 1175zM1590 1324L1613 1331 1610 1346z" />
        </g>
        <g fill="none" stroke="#7fc3c4" stroke-width="2"><path d="M1456 652L1480 723M1409 715V805M1344 935L1342 1016M1414 973L1440 1050M1544 1030L1531 1102" /><path d="M1395 1170L1384 1240M1610 1340L1609 1413" stroke="#b5cfcf" /></g>
        <g fill="#777" stroke="#66aeb3" stroke-width="4">
          <ellipse cx="1483" cy="734" rx="14" ry="12" /><ellipse cx="1408" cy="961" rx="14" ry="11" />
          <ellipse cx="1408" cy="821" rx="9" ry="14" transform="rotate(-18 1408 821)" /><ellipse cx="1341" cy="1028" rx="10" ry="14" transform="rotate(-18 1341 1028)" />
          <ellipse cx="1529" cy="1116" rx="10" ry="14" transform="rotate(-18 1529 1116)" /><ellipse cx="1381" cy="1253" rx="9" ry="14" transform="rotate(-18 1381 1253)" /><ellipse cx="1608" cy="1428" rx="9" ry="14" transform="rotate(-18 1608 1428)" />
        </g>
        <g fill="#e9e9e9">
          <ellipse cx="1483" cy="734" rx="8" ry="7" /><ellipse cx="1408" cy="961" rx="8" ry="7" />
          <ellipse cx="1408" cy="821" rx="5" ry="8" transform="rotate(-18 1408 821)" /><ellipse cx="1341" cy="1028" rx="6" ry="9" transform="rotate(-18 1341 1028)" />
          <ellipse cx="1529" cy="1116" rx="6" ry="9" transform="rotate(-18 1529 1116)" /><ellipse cx="1381" cy="1253" rx="5" ry="9" transform="rotate(-18 1381 1253)" /><ellipse cx="1608" cy="1428" rx="5" ry="9" transform="rotate(-18 1608 1428)" />
        </g>
        <g class="angles">
          <text x="1493" y="648" transform="rotate(14 1493 648)" fill="#8e8e8a">-60°</text>
          <text x="1401" y="710" transform="rotate(4 1401 710)" fill="#555">4°</text>
          <text x="1336" y="924" transform="rotate(25 1336 924)" fill="#666">5°</text>
          <text x="1347" y="1064" transform="rotate(12 1347 1064)" fill="#77777a">60°</text>
          <text x="1524" y="1013" transform="rotate(22 1524 1013)" fill="#777">-9°</text>
        </g>
        <!-- pointer -->
        <path d="M2443 1430V1456L2449 1451 2454 1461 2459 1459 2455 1449H2462z" fill="#000" stroke="#fff" stroke-width="2" />
      </svg>

      <svg class="viewcube" width="220" height="235" viewBox="2640 155 220 235" aria-label="View cube">
        <defs><linearGradient id="cubeface" x1="0" y1="0" x2="0" y2="1"><stop offset="0" stop-color="#f0f0f0" /><stop offset="1" stop-color="#d4d4d4" /></linearGradient><filter id="cubeblur" x="-20%" y="-20%" width="140%" height="150%"><feGaussianBlur stdDeviation="7" /></filter></defs>
        <path d="M2688 318L2753 300 2818 318 2753 372z" fill="#a4a4a4" filter="url(#cubeblur)" />
        <path d="M2753 203L2822 235 2753 275 2683 235z" fill="#ececec" /><path d="M2683 235L2753 275V357L2690 312z" fill="url(#cubeface)" /><path d="M2822 235L2753 275V357L2815 312z" fill="url(#cubeface)" />
        <path d="M2753 259L2767 267V284L2753 291 2739 284V267z" fill="#d9dbdc" opacity=".8" />
        <path d="M2753 203L2822 235 2753 275 2683 235zM2683 235L2690 312 2753 357 2815 312 2822 235M2753 275V357" fill="none" stroke="#8c8c8c" stroke-width="1" />
        <path d="M2753 203V190" stroke="#6bf56b" stroke-width="2" /><path d="M2690 312L2678 319" stroke="#7474f4" stroke-width="2" /><path d="M2815 312L2828 319" stroke="#f08080" stroke-width="2" />
        <g class="face" text-anchor="middle">
          <text transform="translate(2749 240) rotate(28) skewX(-28)">TOP</text>
          <text transform="translate(2718 303) skewY(33)">FRONT</text>
          <text transform="translate(2788 302) skewY(-33)">RIGHT</text>
        </g>
        <g class="axis" text-anchor="middle"><text x="2753" y="187" fill="#5cf55c">Y</text><text x="2667" y="336" fill="#6c6cf6">Z</text><text x="2838" y="336" fill="#fb7070">X</text></g>
      </svg>

      <div class="ribbon">
        <button class="mode"><i class="grip"></i><span>MODEL</span><i class="caret white"></i></button>
        <section v-for="g in groups" :key="g.label" class="group" :class="{ trio: g.icons.length === 3 }">
          <div class="tools">
            <button v-for="ic in g.icons" :key="ic" class="tool" :class="{ picked: g.active }" :aria-label="ic"><svg width="64" height="64"><use :href="'#' + ic" /></svg></button>
          </div>
          <button class="menu">{{ g.label }}<i class="caret"></i></button>
        </section>
      </div>

      <section class="panel">
        <button class="rewind" aria-label="Collapse"><svg width="20" height="16" viewBox="0 0 20 16"><path d="M10 0v16L0 8zM20 0v16L10 8z" fill="#3c3c3c" /></svg></button>
        <h2>BROWSER</h2>
        <button class="knob" aria-label="Hide"><svg width="20" height="20" viewBox="0 0 20 20"><circle cx="10" cy="10" r="9" fill="#333" /><path d="M5 10h10" stroke="#ddd" stroke-width="2" /></svg></button>
        <i class="bars"></i>
      </section>

      <div class="tree">
        <div class="root">
          <svg class="open" width="16" height="16" viewBox="0 0 16 16"><path d="M15 1v14H1z" fill="#555" stroke="#000" stroke-width="2" /></svg>
          <div class="rootchip">
            <div class="picked-row"><svg width="32" height="32"><use href="#bulb-on" /></svg><svg width="32" height="32"><use href="#assembly" /></svg><span>Assem1 v1</span></div>
            <input type="radio" checked aria-label="Activate Assem1 v1" />
          </div>
        </div>
        <ul>
          <li v-for="n in nodes" :key="n.label">
            <svg class="arrow" width="14" height="20" viewBox="0 0 14 20"><path d="M1 1h2l10 9-10 9H1z" fill="#f5f5f5" stroke="#000" stroke-width="1" /></svg>
            <div class="chip"><svg v-if="n.bulb" width="32" height="32"><use :href="'#bulb-' + n.bulb" /></svg><svg width="32" height="32"><use :href="'#' + n.icon" /></svg><span>{{ n.label }}</span></div>
          </li>
        </ul>
      </div>

      <div class="bottom">
        <section class="panel comments">
          <h2>COMMENTS</h2>
          <button class="knob" aria-label="Show comments"><svg width="20" height="20" viewBox="0 0 20 20"><circle cx="10" cy="10" r="9" fill="#333" /><path d="M5 10h10M10 5v10" stroke="#ddd" stroke-width="2" /></svg></button>
          <i class="bars"></i>
        </section>
        <div class="nav">
          <div class="navbar">
            <button aria-label="Orbit"><svg width="32" height="32"><use href="#orbit" /></svg><i class="caret"></i></button>
            <button class="wide" aria-label="Look at"><svg width="32" height="32"><use href="#lookat" /></svg></button>
            <button class="wide" aria-label="Pan"><svg width="32" height="32"><use href="#pan" /></svg></button>
            <button class="wide" aria-label="Zoom"><svg width="32" height="32"><use href="#zoom" /></svg></button>
            <button aria-label="Fit"><svg width="32" height="32"><use href="#fit" /></svg><i class="caret"></i></button>
          </div>
          <div class="navbar display">
            <button aria-label="Display settings"><svg width="32" height="32"><use href="#display" /></svg><i class="caret"></i></button>
            <button aria-label="Grid"><svg width="32" height="32"><use href="#gridset" /></svg><i class="caret"></i></button>
            <button aria-label="Viewports"><svg width="32" height="32"><use href="#views" /></svg><i class="caret"></i></button>
          </div>
        </div>
      </div>
    </main>

    <footer class="timeline">
      <div class="playback">
        <button v-for="p in playback" :key="p" :aria-label="p"><svg width="32" height="32"><use :href="'#' + p" /></svg></button>
      </div>
      <ol class="steps old"><li v-for="(s, i) in history" :key="i"><svg width="32" height="32"><use :href="'#' + s" /></svg></li></ol>
      <ol class="steps new"><li v-for="(s, i) in recent" :key="i"><svg width="32" height="32"><use :href="'#' + s" /></svg></li></ol>
      <svg class="marker" width="24" height="64" viewBox="0 0 24 64"><path d="M0 0h24v8L14 18v46h-4V18L0 8z" fill="#707070" /></svg>
      <span class="grow"></span>
      <button class="settings" aria-label="Timeline settings"><svg width="32" height="32"><use href="#gear" /></svg></button>
    </footer>
  </div>
</template>

<style>
body { background: #6b5563; }
</style>

<style scoped>
.app { display: flex; flex-direction: column; min-height: 100vh; overflow: hidden; border-radius: 10px; background: #ededed; font-family: "Noto Sans", "Open Sans", sans-serif; font-size: 22px; color: #4a4a4a; }
.app * { box-sizing: border-box; }
.sprite { position: absolute; }
button { display: inline-flex; align-items: center; margin: 0; padding: 0; border: 0; background: none; font: inherit; color: inherit; }
svg { display: block; flex: none; overflow: visible; }
h1, h2, ul, ol { margin: 0; padding: 0; font-weight: 400; list-style: none; }
.grow { flex: 1; }
.caret { flex: none; width: 18px; height: 12px; background: #3c3c3c; clip-path: polygon(0 0, 100% 0, 50% 100%); }
.caret.dim { background: #8c8c8c; }
.caret.white { background: #fff; }

.titlebar { display: grid; grid-template-columns: 1fr auto 1fr; align-items: center; height: 44px; padding: 0 16px; border-top: 2px solid #f4f3f4; border-bottom: 2px solid #b0aeb0; background: linear-gradient(#e8e6e9, #d0ced1); }
.lights { display: flex; gap: 16px; }
.light { width: 24px; height: 24px; border: 1px solid #e0443e; border-radius: 50%; background: #ff5f57; }
.light.amber { border-color: #dea123; background: #ffbd2e; }
.light.green { border-color: #1aab29; background: #28c940; }
.title { font-size: 26px; line-height: 36px; color: #2e2e2e; }

.quickbar { display: flex; align-items: center; gap: 48px; height: 60px; padding: 4px 22px 0 24px; border-bottom: 4px solid #a0a0a0; background: #ddd; }
.quick { gap: 12px; line-height: 32px; }
.quick:nth-child(2) { gap: 8px; margin-left: 4px; }
.save { margin-left: -2px; }
.redo { margin-left: -22px; }
.user { gap: 10px; margin-left: 8px; color: #3c3c3c; }
.helpbtn { gap: 8px; margin-left: -4px; }

.tabs { display: flex; height: 43px; border-bottom: 2px solid #a0a0a0; background: #ddd; }
.tab { display: flex; align-items: center; flex: 0 1 400px; gap: 18px; padding: 0 12px 0 20px; border-right: 4px solid #a0a0a0; color: #9c9c9c; }
.tabname { flex: 1; gap: 18px; min-width: 0; font-size: 25px; line-height: 32px; white-space: nowrap; }
.tabname span { padding-top: 5px; }
.tabname svg { color: #a9a9a9; }
.tab.active { background: #eef0ef; color: #666; font-weight: 700; }
.tab.active .tabname svg { color: #727272; }
.ring { width: 18px; height: 18px; border: 2px solid #4fc3a8; border-radius: 50%; }
.close { color: #8e8e96; }
.tab .ring, .close { margin-top: 6px; }
.close.strong { color: #1c1c30; }
.addtab { margin: 6px 0 0 14px; }

.workspace { position: relative; display: flex; flex: 1; flex-direction: column; padding: 9px 8px 8px; }
.scene { position: absolute; inset: 0; width: 100%; height: 100%; }
.viewcube { position: absolute; top: 8px; right: 20px; }
.angles { font-family: "Liberation Sans", sans-serif; font-size: 24px; }
.face { font-size: 17px; font-weight: 700; fill: #9aa0a5; }
.axis { font-family: "Liberation Sans", sans-serif; font-size: 30px; }

.ribbon { position: relative; display: grid; grid-template-columns: 224px 270px 270px 148px 184px 198px 148px 138px 118px 158px 138px; align-self: flex-start; height: 120px; background: #e1e1e1; }
.mode { position: relative; gap: 10px; padding-left: 71px; background: #b5b5b5; color: #fff; font-weight: 700; line-height: 32px; }
.grip { position: absolute; top: 36px; left: 11px; width: 10px; height: 46px; border: solid #8f8f8f; border-width: 0 2px; }
.group { display: flex; flex-direction: column; align-items: center; margin: 9px 0; border-right: 2px solid #bcbcbc; }
.group:last-child { border: 0; }
.tools { display: flex; align-items: center; gap: 22px; height: 78px; }
.tool { filter: drop-shadow(0 2px 1px rgba(0, 0, 0, .25)); }
.tool.picked { padding: 7px; background: #6393bd; filter: none; }
.menu { gap: 4px; line-height: 26px; font-size: 23px; }
.trio .menu { margin-right: 10px; }

.panel { position: relative; display: flex; align-items: center; width: 600px; height: 50px; margin-top: 8px; padding: 0 4px 0 8px; border: 2px solid #b4b4b4; background: #d8d8d8; }
.panel h2 { flex: 1; margin-left: 24px; padding-bottom: 2px; font-size: 22px; line-height: 32px; color: #707070; }
.bars { width: 6px; height: 24px; margin-left: 12px; border: solid #8f8f8f; border-width: 0 2px; }
.comments { margin: 0; }
.comments h2 { margin-left: 44px; }

.tree { position: relative; flex: 1; padding: 10px 0 0 36px; line-height: 30px; }
.root, li { display: flex; align-items: center; }
.root { height: 40px; }
.rootchip { display: flex; align-items: center; height: 40px; margin-left: 20px; padding-right: 14px; background: #cfcfcf; }
.picked-row { display: flex; align-items: center; gap: 18px; height: 40px; padding: 0 30px 0 2px; border: 4px solid #bdbdbd; border-right: 0; background: #848484; color: #fff; font-weight: 700; }
.picked-row span, .chip span { margin-left: 10px; padding-bottom: 2px; white-space: nowrap; }
input[type="radio"] { width: 28px; height: 28px; margin: 0 0 0 8px; border: 2px solid #444; border-radius: 50%; appearance: none; background: radial-gradient(circle, #333 0 5px, #c3c9d8 6px, #eef0f5 13px); }
.tree ul { padding: 8px 0 0 38px; }
.tree li { height: 40px; margin-bottom: 8px; }
.chip { display: flex; align-items: center; gap: 18px; height: 40px; margin-left: 20px; padding: 0 24px 0 6px; background: #cfcfcf; }

.bottom { position: relative; display: grid; grid-template-columns: 1fr auto 1fr; align-items: end; }
.nav { display: flex; gap: 14px; }
.navbar { display: flex; align-items: center; height: 48px; padding: 0 1px 0 6px; background: #cfcfcf; }
.navbar button { gap: 10px; margin-right: 6px; }
.navbar .wide { margin-right: 20px; }
.navbar button:last-child { margin-right: 0; }
.display { padding-right: 2px; }
.display button { gap: 5px; margin-right: 8px; }

.timeline { display: flex; height: 100px; background: #d2d2d2; }
.playback { display: flex; align-items: center; height: 84px; margin: 0 25px 0 9px; }
.playback button { justify-content: center; width: 50px; }
.steps { position: relative; display: flex; height: 80px; padding-top: 28px; }
.steps li { flex-direction: column; width: 48px; }
.steps li::after { flex: none; width: 4px; height: 12px; margin-top: 8px; background: #989898; content: ""; }
.steps::after { position: absolute; right: 22px; bottom: 0; left: 32px; height: 4px; background: #989898; content: ""; }
.steps.new li::after, .steps.new::after { background: #707070; }
.steps.new::after { left: -12px; }
.steps.old li:first-child::after { width: 20px; height: 20px; margin-right: 6px; border: 2px solid #5c5c78; border-radius: 5px; background: linear-gradient(#222, #222) center / 10px 2px no-repeat, #d5dce4; }
.marker { margin: 16px 0 0 -12px; }
.settings { align-self: flex-start; margin: 24px 8px 0 0; }
</style>
